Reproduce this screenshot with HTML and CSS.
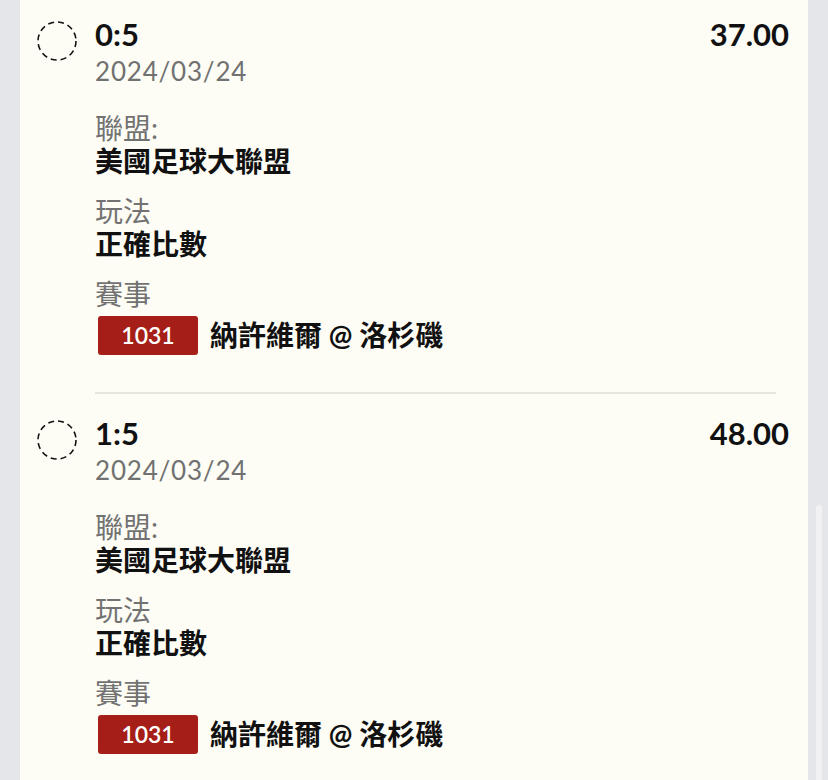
FILE: index.html
```html
<!DOCTYPE html>
<html>
<head>
    <meta charset="utf-8">
    <title>投注紀錄</title>
    <link rel="stylesheet" href="styles.css">
</head>
<body>
    <div class="panel">

        <!-- bet 1 -->
        <div class="bet">
            <svg class="check" width="40" height="40" viewBox="0 0 40 40">
                <circle cx="20" cy="20" r="19" fill="none" stroke="#111" stroke-width="1.6" stroke-dasharray="6 4"/>
            </svg>
            <div class="bet-body">
                <div class="bet-head">
                    <div class="score">0:5</div>
                    <div class="odds">37.00</div>
                </div>
                <div class="date">2024/03/24</div>

                <div class="meta">
                    <div class="label">聯盟:</div>
                    <div class="value">美國足球大聯盟</div>
                </div>
                <div class="meta">
                    <div class="label">玩法</div>
                    <div class="value">正確比數</div>
                </div>
                <div class="meta">
                    <div class="label">賽事</div>
                    <div class="match">
                        <span class="match-no">1031</span>
                        <span class="value">納許維爾 @ 洛杉磯</span>
                    </div>
                </div>
            </div>
        </div>

        <div class="divider"></div>

        <!-- bet 2 -->
        <div class="bet">
            <svg class="check" width="40" height="40" viewBox="0 0 40 40">
                <circle cx="20" cy="20" r="19" fill="none" stroke="#111" stroke-width="1.6" stroke-dasharray="6 4"/>
            </svg>
            <div class="bet-body">
                <div class="bet-head">
                    <div class="score">1:5</div>
                    <div class="odds">48.00</div>
                </div>
                <div class="date">2024/03/24</div>

                <div class="meta">
                    <div class="label">聯盟:</div>
                    <div class="value">美國足球大聯盟</div>
                </div>
                <div class="meta">
                    <div class="label">玩法</div>
                    <div class="value">正確比數</div>
                </div>
                <div class="meta">
                    <div class="label">賽事</div>
                    <div class="match">
                        <span class="match-no">1031</span>
                        <span class="value">納許維爾 @ 洛杉磯</span>
                    </div>
                </div>
            </div>
        </div>

    </div>

    <div class="scroll-thumb"></div>
</body>
</html>
```

FILE: styles.css
```css
* {
    margin: 0px;
    padding: 0px;
    box-sizing: border-box;
    font-family: 'Lato', 'Noto Sans CJK TC', sans-serif;
}

html, body {
    background-color: #e5e6ea;
    height: 100%;
    overflow: hidden;
}

.panel {
    background-color: #fdfdf5;
    margin: 0 20px;
    min-height: 100%;
}

.bet {
    display: flex;
    padding: 22px 19px 37px 17px;
}

.bet:first-child {
    padding-top: 17px;
}

.check {
    display: block;
    flex-shrink: 0;
    margin-top: 4px;
    margin-right: 18px;
}

.bet-body {
    flex: 1;
}

.bet-head {
    display: flex;
    justify-content: space-between;
    align-items: flex-start;
}

.score,
.odds {
    font-size: 31px;
    font-weight: 700;
    line-height: 34px;
    color: #111;
}

.date {
    font-size: 26px;
    line-height: 30px;
    letter-spacing: 0.8px;
    margin-top: 5px;
    color: #717171;
}

.meta {
    margin-top: 17px;
}

.date + .meta {
    margin-top: 26px;
}

.label {
    font-size: 28px;
    line-height: 33px;
    color: #727272;
}

.value {
    font-size: 28px;
    font-weight: 700;
    line-height: 33px;
    color: #111;
}

.match {
    display: flex;
    align-items: center;
    margin-top: 5px;
}

.match-no {
    display: inline-block;
    width: 100px;
    height: 39px;
    line-height: 39px;
    margin-left: 3px;
    margin-right: 12px;
    text-align: center;
    font-size: 23px;
    font-weight: 600;
    color: #fff;
    background-color: #a51f18;
    border-radius: 3px;
}

.divider {
    height: 2px;
    margin: 0 32px 0 75px;
    background-color: #e6e6df;
}

/* overlay scrollbar */
.scroll-thumb {
    position: fixed;
    top: 505px;
    right: 6px;
    width: 6px;
    height: 300px;
    background-color: #f1f1f4;
    border-radius: 3px;
}
```
